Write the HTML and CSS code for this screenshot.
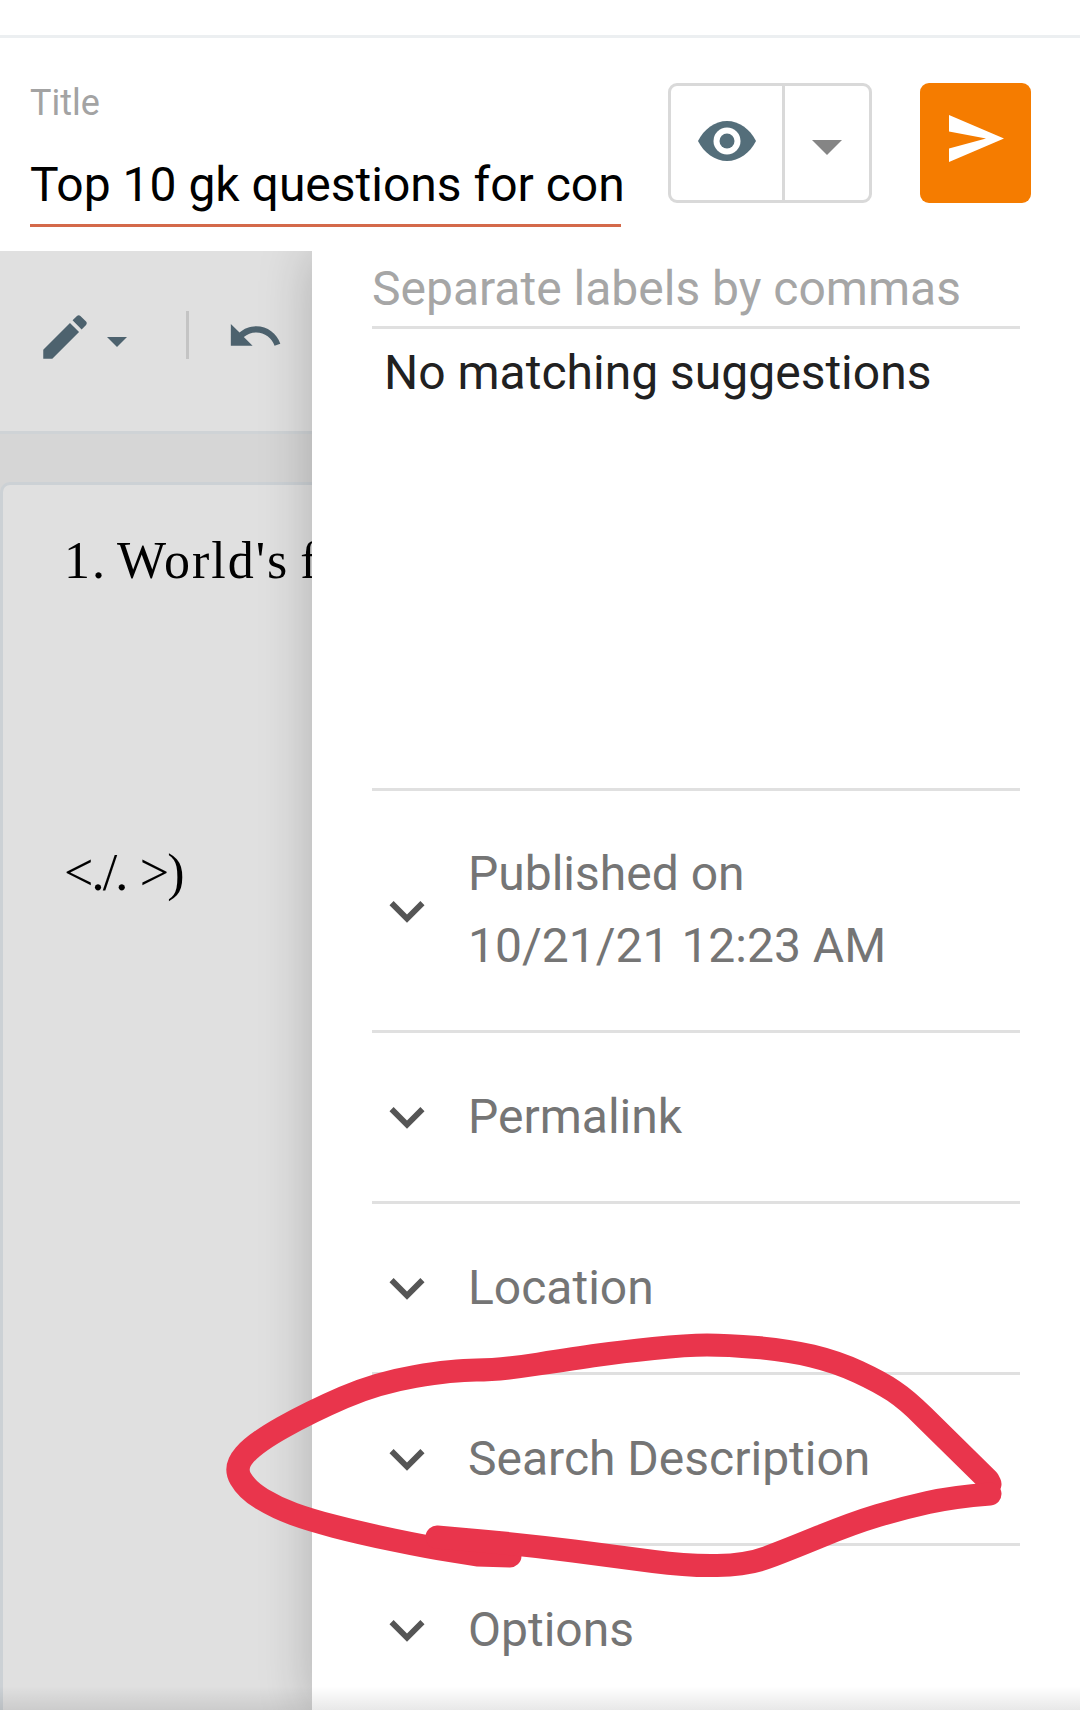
FILE: index.html
```html
<!DOCTYPE html>
<html lang="en">
<head>
<meta charset="utf-8">
<title>Post editor</title>
<link rel="stylesheet" href="styles.css">
</head>
<body>
<div class="page">
  <header class="header">
    <div class="topbar"></div>
    <div class="titlerow">
      <div class="titlefield">
        <div class="titlelabel">Title</div>
        <div class="titleinput">Top 10 gk questions for con</div>
      </div>
      <div class="preview">
        <div class="preview-eye">
          <svg class="eye-icon" viewBox="0 0 58 40"><path d="M0 20C6 8 17 0 29 0s23 8 29 20c-6 12-17 20-29 20S6 32 0 20z" fill="#546e7a"/><circle cx="29" cy="20" r="13.5" fill="#fff"/><circle cx="29" cy="20" r="7.500" fill="#546e7a"/></svg>
        </div>
        <div class="preview-caret"><svg class="caret-icon" viewBox="0 0 30 15"><path d="M0 0h30L15 15z" fill="#858585"/></svg></div>
      </div>
      <div class="publish">
        <svg class="send-icon" viewBox="0 0 55 47"><path d="M0 0l55 23.500L0 47V33.500l37-10L0 16.500z" fill="#fff"/></svg>
      </div>
    </div>
  </header>
  <main class="workspace">
    <section class="editor">
      <div class="toolbar">
        <svg class="pencil-icon" viewBox="0 0 24 24"><path d="M3 17.250V21h3.750L17.810 9.940l-3.750-3.750L3 17.250zM20.710 7.040c.39-.39.39-1.020 0-1.410l-2.340-2.340c-.39-.39-1.020-.39-1.410 0l-1.830 1.830 3.750 3.750 1.830-1.830z" fill="#4d626e"/></svg>
        <svg class="mini-caret" viewBox="0 0 20 10"><path d="M0 0h20L10 10z" fill="#4d626e"/></svg>
        <div class="tool-sep"></div>
        <svg class="undo-icon" viewBox="0 0 24 24"><path d="M12.500 8c-2.650 0-5.050.99-6.900 2.600L2 7v9h9l-3.620-3.620c1.390-1.160 3.160-1.880 5.120-1.880 3.540 0 6.550 2.310 7.600 5.500l2.370-.78C21.080 11.030 17.150 8 12.500 8z" fill="#4d626e"/></svg>
      </div>
      <div class="canvas">
        <article class="doc">
          <p class="doc-line doc-line-first">1. World's f</p>
          <p class="doc-line doc-line-gap">&lt;./. &gt;)</p>
        </article>
      </div>
    </section>
    <aside class="drawer">
      <div class="labels-input">Separate labels by commas</div>
      <div class="suggestions">No matching suggestions</div>
      <div class="row row-tall">
        <svg class="chevron" viewBox="0 0 24 24"><path d="M16.590 8.590L12 13.170 7.410 8.590 6 10l6 6 6-6z"/></svg>
        <div class="row-text"><div>Published on</div><div>10/21/21 12:23 AM</div></div>
      </div>
      <div class="row">
        <svg class="chevron" viewBox="0 0 24 24"><path d="M16.590 8.590L12 13.170 7.410 8.590 6 10l6 6 6-6z"/></svg>
        <div class="row-text">Permalink</div>
      </div>
      <div class="row">
        <svg class="chevron" viewBox="0 0 24 24"><path d="M16.590 8.590L12 13.170 7.410 8.590 6 10l6 6 6-6z"/></svg>
        <div class="row-text">Location</div>
      </div>
      <div class="row">
        <svg class="chevron" viewBox="0 0 24 24"><path d="M16.590 8.590L12 13.170 7.410 8.590 6 10l6 6 6-6z"/></svg>
        <div class="row-text">Search Description</div>
      </div>
      <div class="row row-last">
        <svg class="chevron" viewBox="0 0 24 24"><path d="M16.590 8.590L12 13.170 7.410 8.590 6 10l6 6 6-6z"/></svg>
        <div class="row-text">Options</div>
      </div>
    </aside>
  </main>
  <div class="bottom-fade"></div>
  <svg class="ink" viewBox="0 0 1080 1710">
    <path d="M510 1556L477 1555Q452 1551 452 1551Q427 1547 393.500 1540Q360 1533 335 1526.500Q310 1520 293.500 1514Q277 1508 262 1499Q247 1490 240.500 1478.500Q234 1467 244.500 1455Q255 1443 282.500 1427.500Q310 1412 343.500 1397.500Q377 1383 415 1376.500Q453 1370 476.500 1370Q500 1370 538.500 1364Q577 1358 598.500 1355Q620 1352 653.500 1348.500Q687 1345 707 1345Q727 1345 757 1347.500Q787 1350 812 1356Q837 1362 858.500 1372Q880 1382 893.500 1391Q907 1400 923.500 1416.500L988 1480L990 1484"/>
    <path d="M990 1494Q953 1497 928 1502.500Q903 1508 878 1515.500Q853 1523 820 1536.500Q787 1550 767 1557.500Q747 1565 717 1565.500Q687 1566 653.500 1561.500Q620 1557 573.500 1551Q527 1545 482 1541L437 1537"/>
  </svg>
</div>
</body>
</html>
```
FILE: styles.css
```css
* { box-sizing: border-box; }
html, body { margin: 0; padding: 0; background: #fff; }
.page {
  position: relative;
  width: 1080px;
  height: 1710px;
  overflow: hidden;
  display: flex;
  flex-direction: column;
  font-family: Roboto, "Liberation Sans", sans-serif;
}
.header { position: relative; z-index: 2; background: #fff; height: 251px; flex: none; }
.topbar { height: 38px; border-bottom: 3px solid #eceff1; }
.titlerow { display: flex; align-items: flex-start; padding: 45px 47px 0 30px; }
.titlefield { width: 591px; }
.titlelabel { font-size: 36px; line-height: 40px; color: #a3a3a3; }
.titleinput {
  margin-top: 32px;
  height: 72px;
  font-size: 48px;
  line-height: 60px;
  color: #000;
  white-space: nowrap;
  border-bottom: 3px solid #d4694a;
}
.preview {
  display: flex;
  width: 204px;
  height: 120px;
  margin-left: 47px;
  border: 3px solid #d9d9d9;
  border-radius: 9px;
}
.preview-eye {
  width: 114px;
  border-right: 3px solid #d9d9d9;
  padding: 35px 0 0 27px;
}
.eye-icon { display: block; width: 58px; height: 40px; }
.preview-caret { flex: 1; padding: 54px 0 0 27px; }
.caret-icon { display: block; width: 30px; height: 15px; }
.publish {
  width: 111px;
  height: 120px;
  margin-left: 48px;
  background: #f57c00;
  border-radius: 9px;
  padding: 32px 0 0 29px;
}
.send-icon { display: block; width: 55px; height: 47px; }

.workspace { flex: 1; display: flex; min-height: 0; }
.editor { width: 312px; flex: none; background: #d6d6d6; overflow: hidden; }
.toolbar {
  display: flex;
  align-items: flex-start;
  height: 183px;
  padding: 57px 0 0 36px;
  background: #e0e0e0;
  border-bottom: 3px solid #cfd3d6;
}
.pencil-icon { width: 58px; height: 58px; flex: none; }
.mini-caret { width: 20px; height: 10px; margin: 29px 0 0 13px; flex: none; }
.tool-sep { width: 3px; height: 48px; margin: 3px 0 0 59px; background: #c4c4c4; flex: none; }
.undo-icon { width: 58px; height: 58px; margin: -1px 0 0 37px; flex: none; }
.canvas { padding-top: 48px; height: 100%; }
.doc {
  height: 100%;
  padding: 40px 0 0 61px;
  background: #e0e0e0;
  border-top: 3px solid #ccd1d5;
  border-left: 3px solid #ccd1d5;
  border-top-left-radius: 10px;
}
.doc-line {
  margin: 0;
  font-family: "Liberation Serif", serif;
  font-size: 52px;
  line-height: 72px;
  color: #000;
  white-space: nowrap;
}
.doc-line-first { letter-spacing: 2px; word-spacing: -4px; }
.doc-line-gap { margin-top: 240px; letter-spacing: -1.800px; word-spacing: 2px; }

.drawer {
  position: relative;
  z-index: 1;
  flex: 1;
  padding: 0 60px;
  background: #fff;
  box-shadow: 0 0 50px rgba(0, 0, 0, .22);
}
.labels-input {
  height: 78px;
  padding-top: 10px;
  font-size: 48px;
  line-height: 56px;
  color: #a6a6a6;
  border-bottom: 3px solid #e0e0e0;
}
.suggestions {
  height: 462px;
  padding: 14px 0 0 12px;
  font-size: 48px;
  line-height: 60px;
  color: #212121;
  border-bottom: 3px solid #e0e0e0;
}
.row {
  display: flex;
  align-items: center;
  height: 171px;
  border-bottom: 3px solid #e0e0e0;
}
.row-tall { height: 242px; }
.row-last { border-bottom: 0; padding-bottom: 3px; }
.chevron { width: 70px; height: 70px; margin-right: 26px; flex: none; fill: #555; }
.row-text { font-size: 48px; line-height: 72px; color: #757575; padding-bottom: 1px; }

.bottom-fade {
  position: absolute;
  left: 0;
  right: 0;
  bottom: 0;
  height: 24px;
  z-index: 3;
  background: linear-gradient(rgba(0, 0, 0, 0), rgba(0, 0, 0, .09));
}
.ink {
  position: absolute;
  left: 0;
  top: 0;
  width: 1080px;
  height: 1710px;
  z-index: 4;
  fill: none;
  stroke: #e9354c;
  stroke-width: 23;
  stroke-linecap: round;
  stroke-linejoin: round;
}
```
